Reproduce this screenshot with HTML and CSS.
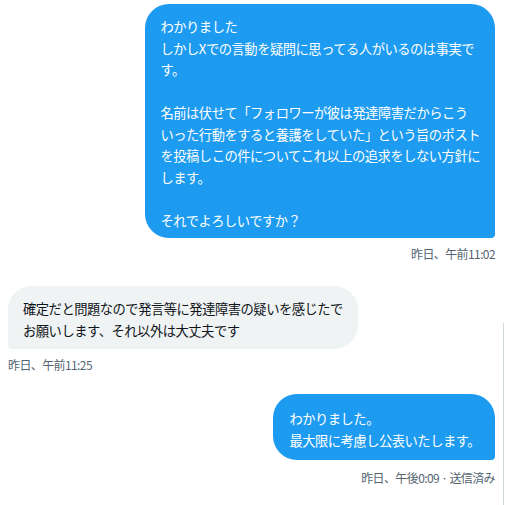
FILE: index.html
```html
<!DOCTYPE html>
<html>
  <head>
    <title>DM</title>
    <link rel="stylesheet" href="styles.css">
  </head>
  <body>
    <div class="thread">
      <div class="message sent">
        <div class="bubble bubble-long">わかりました<br>しかしXでの言動を疑問に思ってる人がいるのは事実で<br>す。<br><br>名前は伏せて「フォロワーが彼は発達障害だからこう<br>いった行動をすると養護をしていた」という旨のポスト<br>を投稿しこの件についてこれ以上の追求をしない方針に<br>します。<br><br>それでよろしいですか？</div>
        <div class="meta">昨日、午前11:02</div>
      </div>
      <div class="message received">
        <div class="bubble">確定だと問題なので発言等に発達障害の疑いを感じたで<br>お願いします、それ以外は大丈夫です</div>
        <div class="meta">昨日、午前11:25</div>
      </div>
      <div class="message sent last">
        <div class="bubble">わかりました。<br>最大限に考慮し公表いたします。</div>
        <div class="meta">昨日、午後0:09 · 送信済み</div>
      </div>
    </div>
    <div class="edge"></div>
  </body>
</html>
```

FILE: styles.css
```css
body {
  margin: 0;
  background-color: #fff;
  font-family: "Noto Sans CJK JP", "Noto Sans", sans-serif;
  color: #0f1419;
}

.thread {
  display: flex;
  flex-direction: column;
  padding: 4px 10px 0 8px;
}

.message {
  display: flex;
  flex-direction: column;
}

.message.sent {
  align-items: flex-end;
}

.message.received {
  align-items: flex-start;
  margin-top: 24px;
}

.message.last {
  margin-top: 21px;
}

.bubble {
  padding: 12px 15px 8px;
  font-size: 13.3px;
  line-height: 21.5px;
  letter-spacing: -0.5px;
  white-space: nowrap;
  border-radius: 24px;
}

.sent .bubble {
  background-color: #1d9bf0;
  color: #fff;
  border-bottom-right-radius: 4px;
}

.received .bubble {
  background-color: #eff3f4;
  border-bottom-left-radius: 4px;
}

.last .bubble {
  padding: 14px 15px 9px 16px;
}

.bubble-long {
  padding-bottom: 7px;
}

.meta {
  margin-top: 8px;
  font-size: 12px;
  line-height: 16px;
  letter-spacing: -0.6px;
  color: #536471;
}

.last .meta {
  margin-top: 10px;
}

.edge {
  position: absolute;
  top: 323px;
  right: 1px;
  bottom: 0;
  width: 1px;
  background-color: #cfd9de;
}
```
